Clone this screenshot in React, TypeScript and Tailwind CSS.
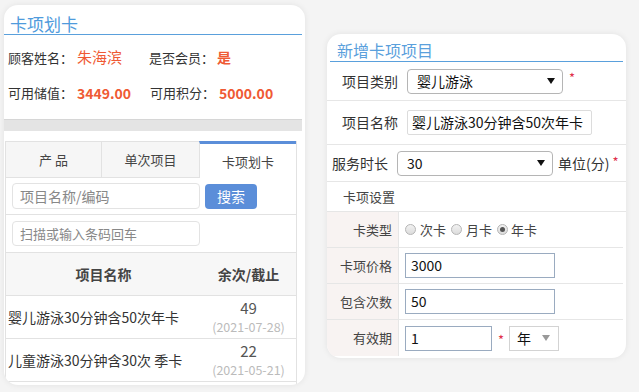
const FONT = { fontFamily: '"Noto Sans CJK SC", "Noto Sans", sans-serif' }

function Caret({ className = "" }: { className?: string }) {
  return (
    <svg viewBox="0 0 8 6" className={`h-[6px] w-[8px] ${className}`}>
      <path d="M0 0 L8 0 L4 6 Z" fill="currentColor" />
    </svg>
  )
}

function Star({ className = "" }: { className?: string }) {
  return <span className={`text-[13px] leading-none text-[#e0304a] ${className}`}>*</span>
}

function LeftCard() {
  const rows = [
    { name: "婴儿游泳30分钟含50次年卡", left: "49", date: "(2021-07-28)" },
    { name: "儿童游泳30分钟含30次 季卡", left: "22", date: "(2021-05-21)" },
  ]
  return (
    <div className="ml-[4px] mt-[5px] flex h-[380px] w-[301px] shrink-0 flex-col overflow-hidden rounded-[14px] bg-white pr-[3px] shadow-[0_0_6px_rgba(0,0,0,0.08)]">
      <div className="flex h-[30px] items-end border-b border-[#5aa0dc] pb-[2px] pl-[6px] text-[17px] leading-none text-[#4f9bdc]">
        卡项划卡
      </div>
      <div className="flex h-[35px] items-center pl-[4px] pt-[10px] text-[13px] text-[#333]">
        <span>顾客姓名：</span>
        <span className="ml-[4px] w-[72px] text-[15px] text-[#ef5a34]">朱海滨</span>
        <span>是否会员：</span>
        <span className="ml-[3px] text-[14px] font-bold text-[#ef5a34]">是</span>
      </div>
      <div className="flex h-[36px] items-center pl-[4px] pt-[10px] text-[13px] text-[#333]">
        <span>可用储值：</span>
        <span className="ml-[4px] w-[73px] text-[14px] font-bold text-[#ef5a34]">3449.00</span>
        <span>可用积分：</span>
        <span className="ml-[4px] text-[14px] font-bold text-[#ef5a34]">5000.00</span>
      </div>
      <div className="mt-[13px] h-[12px] border-t border-[#d6d6d6] bg-[#e4e4e4]" />
      <div className="ml-[1px] mr-[5px] mt-[10px] flex flex-1 flex-col border-l border-r border-[#e2e2e2]">
        <div className="flex h-[37px] text-[13px] text-[#444]">
          <div className="flex w-[96px] items-center justify-center border-b border-r border-t border-[#e2e2e2] bg-[#f6f6f6]">
            产 品
          </div>
          <div className="flex w-[97px] items-center justify-center border-b border-t border-[#e2e2e2] bg-[#f6f6f6]">
            单次项目
          </div>
          <div className="flex flex-1 items-center justify-center border-l border-t-[3px] border-[#e2e2e2] border-t-[#5b8ed9] bg-white pt-[1px]">
            卡项划卡
          </div>
        </div>
        <div className="flex h-[37px] items-center gap-[5px] border-b border-[#e2e2e2] pl-[6px]">
          <div className="flex h-[26px] w-[188px] items-center rounded-[4px] border border-[#e3e3e3] pl-[7px] text-[14px] text-[#888]">
            项目名称/编码
          </div>
          <div className="flex h-[25px] w-[52px] items-center justify-center rounded-[4px] bg-[#5b8ed9] text-[14px] text-white">
            搜索
          </div>
        </div>
        <div className="flex h-[38px] items-center border-b border-[#e2e2e2] pl-[6px]">
          <div className="flex h-[25px] w-[188px] items-center rounded-[4px] border border-[#e3e3e3] pl-[7px] text-[13px] text-[#888]">
            扫描或输入条码回车
          </div>
        </div>
        <div className="flex h-[43px] items-center border-b border-[#e2e2e2] bg-[#f7f7f7] text-[14px] font-semibold text-[#444]">
          <div className="w-[195px] text-center">项目名称</div>
          <div className="flex-1 text-center">余次/截止</div>
        </div>
        {rows.map((r) => (
          <div key={r.name} className="flex h-[43px] items-center border-b border-[#e2e2e2] text-[14px] text-[#333]">
            <div className="w-[195px] whitespace-nowrap pl-[2px]">{r.name}</div>
            <div className="flex flex-1 flex-col items-center leading-[19px]">
              <span className="text-[15px] text-[#555]">{r.left}</span>
              <span className="text-[12.5px] text-[#bbb]">{r.date}</span>
            </div>
          </div>
        ))}
      </div>
    </div>
  )
}

function Field({ value, w, blue = true }: { value: string; w: string; blue?: boolean }) {
  return (
    <div
      className={`flex h-[25px] items-center border pl-[5px] text-[14px] text-[#111] ${w} ${
        blue ? "border-[#9aabc0]" : "border-[#d3d3d3]"
      }`}
    >
      {value}
    </div>
  )
}

function RightCard() {
  return (
    <div className="ml-[22px] mt-[34px] flex h-[324px] w-[299px] shrink-0 flex-col overflow-hidden rounded-[14px] bg-white shadow-[0_0_6px_rgba(0,0,0,0.08)]">
      <div className="mx-[3px] flex h-[28px] items-end border-b border-[#5aa0dc] pb-[3px] pl-[7px] text-[16px] leading-none text-[#5aa0dc]">
        新增卡项项目
      </div>
      <div className="flex h-[39px] items-center border-b border-[#e6e6e6] pl-[15px] text-[14px] text-[#333]">
        <span className="w-[65px]">项目类别</span>
        <div className="flex h-[25px] w-[156px] items-center justify-between rounded-[4px] border border-[#b5b5b5] pl-[9px] pr-[7px] text-[14px] text-[#111]">
          婴儿游泳
          <Caret className="text-[#111]" />
        </div>
        <Star className="mb-[8px] ml-[6px]" />
      </div>
      <div className="flex h-[44px] items-center border-b border-[#e6e6e6] pl-[15px] text-[14px] text-[#333]">
        <span className="w-[65px]">项目名称</span>
        <div className="flex h-[25px] w-[185px] items-center rounded-[2px] border border-[#dcdcdc] pl-[4px] text-[14px] text-[#111]">
          婴儿游泳30分钟含50次年卡
        </div>
      </div>
      <div className="flex h-[37px] items-center border-b border-[#e6e6e6] pl-[5px] text-[14px] text-[#333]">
        <span className="w-[65px]">服务时长</span>
        <div className="flex h-[25px] w-[156px] items-center justify-between rounded-[4px] border border-[#b5b5b5] pl-[9px] pr-[7px] text-[14px] text-[#111]">
          30
          <Caret className="text-[#111]" />
        </div>
        <span className="ml-[5px] text-[14px] text-[#333]">单位(分)</span>
        <Star className="mb-[4px] ml-[3px]" />
      </div>
      <div className="flex h-[30px] items-center border-b border-[#e6e6e6] pl-[16px] text-[13px] text-[#444]">
        卡项设置
      </div>
      <div className="flex flex-1 flex-col text-[13px] text-[#444]">
        <Row label="卡类型">
          <div className="flex items-center text-[13px] text-[#444]">
            <Radio />
            <span className="ml-[4px] mr-[5px]">次卡</span>
            <Radio />
            <span className="ml-[4px] mr-[5px]">月卡</span>
            <Radio checked />
            <span className="ml-[3px]">年卡</span>
          </div>
        </Row>
        <Row label="卡项价格">
          <Field value="3000" w="w-[150px]" />
        </Row>
        <Row label="包含次数">
          <Field value="50" w="w-[150px]" />
        </Row>
        <Row label="有效期" last>
          <Field value="1" w="w-[87px]" />
          <Star className="ml-[6px] mr-[5px] mt-[2px]" />
          <div className="flex h-[25px] w-[50px] items-center justify-between border border-[#d3d3d3] pl-[7px] pr-[8px] text-[14px] text-[#111]">
            年
            <Caret className="text-[#999]" />
          </div>
        </Row>
      </div>
    </div>
  )
}

function Radio({ checked = false }: { checked?: boolean }) {
  return (
    <span className="flex h-[11px] w-[11px] items-center justify-center rounded-full border border-[#b5b5b5] bg-gradient-to-b from-[#f2f2f2] to-[#dcdcdc]">
      {checked && <span className="h-[5px] w-[5px] rounded-full bg-[#555]" />}
    </span>
  )
}

function Row({ label, children, last = false }: { label: string; children: React.ReactNode; last?: boolean }) {
  return (
    <div className={`flex h-[36px] ${last ? "" : "border-b border-[#e6e6e6]"} mr-[3px]`}>
      <div className="flex w-[72px] items-center justify-end border-r border-[#e6e6e6] bg-[#f8f3f2] pr-[6px]">
        {label}
      </div>
      <div className="flex flex-1 items-center pl-[6px]">{children}</div>
    </div>
  )
}

export default function App() {
  return (
    <div className="flex h-[392px] w-[639px] items-start overflow-hidden bg-[#f4f4f4]" style={FONT}>
      <LeftCard />
      <RightCard />
    </div>
  )
}
